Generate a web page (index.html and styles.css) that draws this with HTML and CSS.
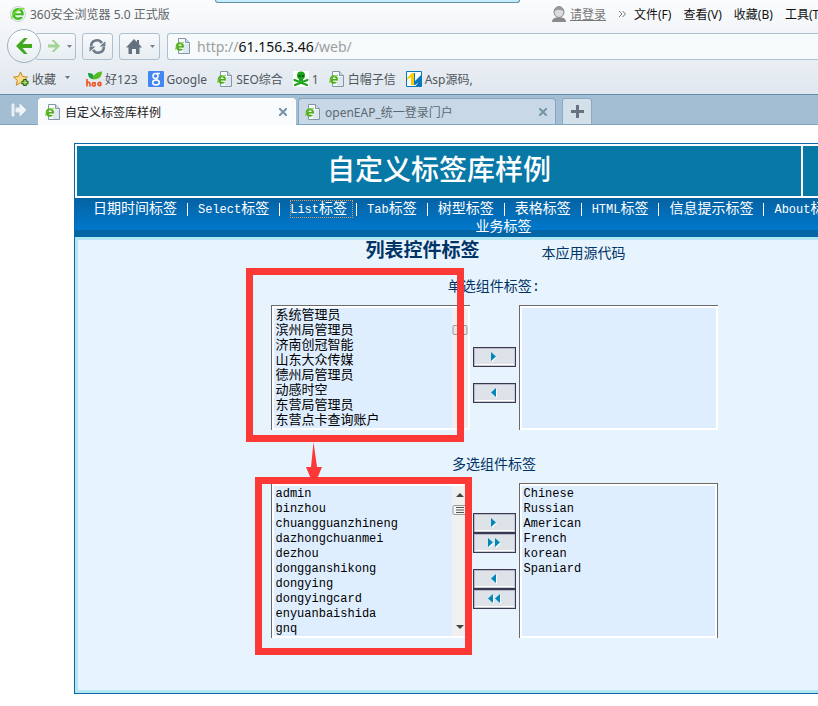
FILE: index.html
```html
<!DOCTYPE html>
<html lang="zh-CN">
<head>
<meta charset="utf-8">
<title>自定义标签库样例</title>
<link rel="stylesheet" href="styles.css">
</head>
<body>
<svg class="defs" aria-hidden="true">
  <symbol id="page-e" viewBox="0 0 16 16">
    <path d="M3.5 .5h7l4 4v11h-11z" fill="#f6fafc" stroke="#8298a8"/>
    <path d="M10.500.5v4h4" fill="#cddbe5" stroke="#8298a8"/>
    <path d="M8 6h6v9H8z" fill="#dfe8ee"/>
    <ellipse cx="4.800" cy="8.500" rx="3.100" ry="3.200" fill="none" stroke="#4dae17" stroke-width="2"/>
    <path d="M2 8.800h6" stroke="#4dae17" stroke-width="1.600"/>
    <path d="M5.800 9.700h3v1.300h-3z" fill="#f6fafc"/>
    <path d="M.8 12C0 9 4 5 9 4.600" fill="none" stroke="#7ccb3a"/>
  </symbol>
  <symbol id="tri-right" viewBox="0 0 6 10"><path d="M1 1v9l5-4.500z" fill="#fff"/><path d="M0 0v9l5-4.500z" fill="#0088b8"/></symbol>
  <symbol id="tri-left" viewBox="0 0 6 10"><path d="M6 1v9L1 5z" fill="#fff"/><path d="M5 0v9L0 4.500z" fill="#0088b8"/></symbol>
</svg>

<header class="browser">
  <div class="titlebar">
    <svg class="logo" viewBox="0 0 16 16"><circle cx="8" cy="8" r="7.500" fill="#eef4ee" stroke="#c9d3d8"/><ellipse cx="8" cy="8" rx="4.500" ry="4.800" fill="none" stroke="#3dbb22" stroke-width="2.600"/><path d="M4 8.300h8.500" stroke="#3dbb22" stroke-width="2"/><path d="M9.500 9.400h4.500v1.500H9.500z" fill="#eef4ee"/><path d="M2 13C1 9 8 2 14.500 2.500" fill="none" stroke="#7bdc3a" stroke-width="1.400"/></svg>
    <span class="product">360安全浏览器 5.0 正式版</span>
    <span class="skin-edge"></span>
    <nav class="menu">
      <svg class="user" viewBox="0 0 14 16"><path d="M0 16c0-3 2-4 4-4.500h6c2 .5 4 1.500 4 4.500z" fill="#8a8a8a"/><ellipse cx="7" cy="6" rx="5" ry="5.500" fill="#dcdcdc" stroke="#8a8a8a"/><path d="M2 6C2-1 12-1 12 6 10 3 4 3 2 6z" fill="#999"/></svg>
      <a class="login" href="#">请登录</a>
      <svg class="more" viewBox="0 0 8 8"><path d="M1 1l3 3-3 3M4.500 1l3 3-3 3" fill="none" stroke="#777"/></svg>
      <a href="#">文件(F)</a><a href="#">查看(V)</a><a href="#">收藏(B)</a><a href="#">工具(T)</a>
    </nav>
  </div>

  <div class="toolbar">
    <div class="history">
      <button class="back" aria-label="后退"><svg viewBox="0 0 16 16"><path d="M8 0L0 8l8 8h3.500L6.500 10H16V6H6.500l5-6z" fill="#42a81d"/></svg></button>
      <button class="forward" aria-label="前进"><svg class="arrow" viewBox="0 0 12 12"><path d="M6 0l6 6-6 6H3.500l4-4.500H0v-3h7.500L3.500 0z" fill="#9fd492"/></svg><svg class="caret" viewBox="0 0 5 3"><path d="M0 0h5L2.500 3z" fill="#75828e"/></svg></button>
    </div>
    <button class="tool" aria-label="刷新"><svg class="refresh" viewBox="0 0 18 16"><path d="M3 7.500C3 1.500 11 .5 13 5M15 8.500c0 6-8 7-10 2.500" fill="none" stroke="#6d7b89" stroke-width="2.400"/><path d="M16.500 3v5H11zM1.500 13V8H7z" fill="#6d7b89"/></svg></button>
    <button class="tool home" aria-label="主页"><svg class="house" viewBox="0 0 16 15"><path d="M8 0l3 3V1h2v4l3 3.500h-2.500V15H10v-5H6v5H2.500V8.500H0z" fill="#65717e"/></svg><svg class="caret" viewBox="0 0 5 3"><path d="M0 0h5L2.500 3z" fill="#75828e"/></svg></button>
    <div class="address"><svg class="fav"><use href="#page-e"/></svg><span>http://<b>61.156.3.46</b>/web/</span></div>
  </div>

  <div class="bookmarks">
    <a class="star" href="#"><svg class="fav" viewBox="0 0 16 16"><path d="M7.500 1l2 4.500 5 .5-3.800 3.300 1.100 5-4.300-2.600-4.300 2.600 1.100-5L.5 6l5-.5z" fill="#ffdc86" stroke="#c48a2c"/><path d="M12 8v7M8.500 11.500h7" stroke="#216414" stroke-width="3.500"/><path d="M12 9v5M9.500 11.500h5" stroke="#b7e46a" stroke-width="1.300"/></svg>收藏<svg class="caret" viewBox="0 0 5 3"><path d="M0 0h5L2.500 3z" fill="#66727e"/></svg></a>
    <a href="#"><svg class="fav" viewBox="0 0 16 16"><path d="M2 2c5 0 6 2 6 6-4 0-6-2-6-6z" fill="#19a63a"/><path d="M7 8.500c0-4 3-8 9-8 0 5-3 8-9 8z" fill="#59bd22"/><path d="M1 8v7.500M1 12c3-2 3 0 3 3.500M14.800 12a1.600 1.600 0 1 0 0 2zM9 11v4.500M9 12c-3-1.500-3.500 3-1.500 3s1.500-1 1.500-2" fill="none" stroke="#f0501b" stroke-width="1.600"/></svg>好123</a>
    <a href="#"><svg class="fav" viewBox="0 0 16 16"><rect width="16" height="16" rx="1" fill="#4387f5"/><ellipse cx="7.500" cy="5" rx="2.500" ry="2.500" fill="none" stroke="#fff" stroke-width="1.500"/><ellipse cx="8" cy="11.500" rx="3.300" ry="2.500" fill="none" stroke="#fff" stroke-width="1.500"/><path d="M8 2.500h4M8 7.500l1.500 2" stroke="#fff" stroke-width="1.300"/></svg>Google</a>
    <a href="#"><svg class="fav"><use href="#page-e"/></svg>SEO综合</a>
    <a href="#"><svg class="fav" viewBox="0 0 16 16"><path fill="#fff" d="M0 0h16v16H0z"/><ellipse cx="8" cy="4.500" rx="4" ry="4" fill="#1aa51a"/><path d="M6 7h4v3H6z" fill="#1aa51a"/><path d="M1.500 9L14 14M14.500 9L2 14" stroke="#1aa51a" stroke-width="2.200" stroke-linecap="round"/><path d="M5.500 4h2v2h-2zM8.800 4h2v2h-2z" fill="#075b07"/></svg>1</a>
    <a href="#"><svg class="fav"><use href="#page-e"/></svg>白帽子信</a>
    <a href="#"><svg class="fav" viewBox="0 0 16 16"><path d="M.5.5h15v15H.5z" fill="#fff" stroke="#0877bc"/><path d="M1 7l5-5h2v12H5V6L1 9z" fill="#fc0"/><path d="M9 2v8l6-6v11H9.500l3-3.500L9 14H8V2z" fill="#0877bc"/></svg>Asp源码,</a>
  </div>

  <div class="tabs">
    <button class="side" aria-label="侧边栏"><svg viewBox="0 0 16 14"><path d="M1 1h2v12H1zM5 5h4V1l6 6-6 6V9H5z" fill="#eef4f8" stroke="#e2edf4"/></svg></button>
    <div class="tab active"><svg class="fav"><use href="#page-e"/></svg><span>自定义标签库样例</span><button class="close" aria-label="关闭"><svg viewBox="0 0 8 8"><path d="M0 0l8 8M8 0L0 8" stroke="#7793aa" stroke-width="2"/></svg></button></div>
    <div class="tab"><svg class="fav"><use href="#page-e"/></svg><span>openEAP_统一登录门户</span><button class="close" aria-label="关闭"><svg viewBox="0 0 8 8"><path d="M0 0l8 8M8 0L0 8" stroke="#7793aa" stroke-width="2"/></svg></button></div>
    <button class="new" aria-label="新标签"><svg viewBox="0 0 13 13"><path d="M6.500 0v13M0 6.500h13" stroke="#67737e" stroke-width="3"/></svg></button>
  </div>
</header>

<main class="frame">
  <div class="banner"><h1>自定义标签库样例</h1><div class="banner-side"></div></div>
  <nav class="site-nav">
    <ul>
      <li><a href="#">日期时间标签</a></li>
      <li><a href="#"><i>Select</i>标签</a></li>
      <li class="focus"><a href="#"><i>List</i>标签</a></li>
      <li><a href="#"><i>Tab</i>标签</a></li>
      <li><a href="#">树型标签</a></li>
      <li><a href="#">表格标签</a></li>
      <li><a href="#"><i>HTML</i>标签</a></li>
      <li><a href="#">信息提示标签</a></li>
      <li><a href="#"><i>About</i>标签</a></li>
    </ul>
    <a class="business" href="#">业务标签</a>
  </nav>
  <section class="panel">
    <div class="heading"><h2>列表控件标签</h2><a href="#">本应用源代码</a></div>

    <div class="picker single">
      <label for="single-from">单选组件标签:</label>
      <div class="lists">
        <div class="listbox">
          <select id="single-from" size="8">
            <option>系统管理员</option><option>滨州局管理员</option><option>济南创冠智能</option><option>山东大众传媒</option><option>德州局管理员</option><option>动感时空</option><option>东营局管理员</option><option>东营点卡查询账户</option>
          </select>
          <span class="scroll"><svg viewBox="0 0 16 10"><rect x="1" y=".5" width="14" height="9" rx="1" fill="#e6e6e6" stroke="#999"/><path d="M5 2.500h6M5 5h6M5 7.500h6" stroke="#555"/></svg></span>
        </div>
        <div class="moves">
          <button aria-label="添加"><svg><use href="#tri-right"/></svg></button>
          <button class="apart" aria-label="移除"><svg><use href="#tri-left"/></svg></button>
        </div>
        <div class="listbox"><select size="8" aria-label="已选"></select></div>
      </div>
      <span class="mark"></span>
      <svg class="pointer" viewBox="0 0 16 37"><path d="M7.500 0l3.500 25h5L11 37H5L0 25h5z" fill="#fd3938"/></svg>
    </div>

    <div class="picker multi">
      <label for="multi-from">多选组件标签</label>
      <div class="lists">
        <div class="listbox">
          <select id="multi-from" size="10" multiple>
            <option>admin</option><option>binzhou</option><option>chuangguanzhineng</option><option>dazhongchuanmei</option><option>dezhou</option><option>dongganshikong</option><option>dongying</option><option>dongyingcard</option><option>enyuanbaishida</option><option>gnq</option>
          </select>
          <span class="scroll ends"><svg class="end" viewBox="0 0 8 4"><path d="M0 4l4-4 4 4z" fill="#444"/></svg><svg viewBox="0 0 16 10"><rect x="1" y=".5" width="14" height="9" rx="1" fill="#f4f4f4" stroke="#999"/><path d="M4 2.500h8M4 5h8M4 7.500h8" stroke="#555"/></svg><svg class="end last" viewBox="0 0 8 4"><path d="M0 0l4 4 4-4z" fill="#444"/></svg></span>
        </div>
        <div class="moves">
          <button aria-label="添加"><svg><use href="#tri-right"/></svg></button>
          <button aria-label="全部添加"><svg><use href="#tri-right"/></svg><svg><use href="#tri-right"/></svg></button>
          <button class="apart" aria-label="移除"><svg><use href="#tri-left"/></svg></button>
          <button aria-label="全部移除"><svg><use href="#tri-left"/></svg><svg><use href="#tri-left"/></svg></button>
        </div>
        <div class="listbox edged">
          <select size="10" multiple aria-label="已选语言">
            <option>Chinese</option><option>Russian</option><option>American</option><option>French</option><option>korean</option><option>Spaniard</option>
          </select>
        </div>
      </div>
      <span class="mark"></span>
    </div>
  </section>
</main>
</body>
</html>
```
FILE: styles.css
```css
* { box-sizing: border-box; }
html { overflow: hidden; }
body {
  margin: 0;
  overflow: hidden;
  background: #fff;
  font-family: "Noto Sans", "Noto Sans CJK SC", sans-serif;
  font-size: 12px;
}
svg { display: block; flex: none; }
a { color: inherit; text-decoration: none; white-space: nowrap; }
button { padding: 0; border: 0; background: none; font: inherit; }
.defs { position: absolute; width: 0; height: 0; }
.fav { width: 16px; height: 16px; }
.caret { width: 5px; height: 3px; }

/* browser chrome */
.browser { background: linear-gradient(#fbfcfd, #edf1f5 50px, #e0e7ef 94px); }
.titlebar {
  display: flex;
  align-items: center;
  height: 31px;
  padding: 0 0 3px 10px;
  color: #606468;
}
.logo { width: 16px; height: 16px; margin-right: 4px; }
.product { white-space: nowrap; flex: none; width: 185px; }
.skin-edge {
  align-self: flex-start;
  flex: none;
  width: 305px;
  height: 3px;
  background: #c4ecfb;
  border: solid #6591a8;
  border-width: 0 1px 1px;
  border-radius: 0 0 4px 4px;
}
.menu {
  display: flex;
  align-items: center;
  gap: 12px;
  height: 31px;
  margin-left: 32px;
  color: #111;
}
.menu .user { width: 14px; height: 16px; margin-right: -8px; }
.menu .login { color: #777; text-decoration: underline; }
.menu .more { width: 8px; height: 8px; margin-right: -4px; }

.toolbar { display: flex; align-items: center; height: 30px; padding-left: 7px; }
.history { display: flex; align-items: center; width: 69px; margin-right: 6px; }
.back {
  position: relative;
  z-index: 1;
  display: grid;
  place-items: center;
  flex: none;
  width: 34px;
  height: 34px;
  border: 1px solid #9fb3c1;
  border-radius: 50%;
  background: linear-gradient(#fff, #e6edf2);
}
.back svg { width: 16px; height: 16px; }
.forward, .tool {
  display: flex;
  align-items: center;
  justify-content: center;
  height: 27px;
  border: 1px solid #abc1d0;
  border-radius: 3px;
  background: linear-gradient(#f7f9fb, #e7edf2);
}
.forward { flex: 1; gap: 7px; margin-left: -6px; padding-left: 8px; }
.forward .arrow { width: 12px; height: 12px; }
.tool { width: 31px; margin-right: 6px; }
.refresh { width: 19px; height: 17px; }
.home { width: 41px; gap: 8px; margin-right: 7px; padding-left: 2px; }
.house { width: 16px; height: 15px; }
.address {
  display: flex;
  align-items: center;
  gap: 6px;
  flex: 1;
  height: 27px;
  padding-left: 7px;
  border: solid #a9c2d2;
  border-width: 1px 0 1px 1px;
  border-radius: 3px 0 0 3px;
  background: #f7fafb;
  color: #9b9fa2;
  font-size: 14px;
}
.address b { color: #111; font-weight: 400; }

.bookmarks {
  display: flex;
  align-items: center;
  gap: 10px;
  height: 33px;
  padding: 3px 0 0 13px;
  color: #50565c;
}
.bookmarks a { display: flex; align-items: center; gap: 3px; }
.bookmarks .caret { margin: 0 6px 4px 6px; }

.tabs {
  display: flex;
  align-items: stretch;
  height: 31px;
  padding-top: 3px;
  border-top: 1px solid #5f8ca9;
  border-bottom: 1px solid #7fa4bd;
  background: #a3bdd3;
}
.side { display: grid; place-items: center; width: 38px; }
.side svg { width: 16px; height: 14px; margin-bottom: 3px; }
.tab {
  display: flex;
  align-items: center;
  gap: 4px;
  width: 258px;
  margin-right: 6px;
  padding: 0 8px 0 6px;
  border: 1px solid #86a6bf;
  border-bottom: 0;
  border-radius: 4px 4px 0 0;
  background: #c9d8e6;
  color: #5c6873;
}
.tab.active {
  margin: 0 2px -1px 0;
  border-color: #fff;
  background: #f9fbfc;
  color: #222;
}
.tab span { flex: 1; white-space: nowrap; }
.tab .close svg { width: 8px; height: 8px; }
.new {
  display: grid;
  place-items: center;
  width: 30px;
  border: 1px solid #8dabc2;
  border-bottom: 0;
  border-radius: 3px 3px 0 0;
  background: #d3dfe9;
}
.new svg { width: 13px; height: 13px; }

/* page: the frame is wider than the window and runs off its right edge */
.frame {
  margin: 18px -115px 0 74px;
  border: 1px solid #0b67a5;
  color: #036;
  font-family: "Liberation Mono", "Noto Sans CJK SC", monospace;
  font-size: 14px;
}
.banner {
  display: flex;
  gap: 2px;
  height: 54px;
  padding: 2px;
  background: #fff;
}
.banner h1 {
  flex: 1;
  margin: 0;
  padding-top: 4px;
  background: #0878a6;
  color: #fff;
  font-size: 28px;
  font-weight: 500;
  line-height: 46px;
  text-align: center;
}
.banner-side { width: 127px; background: #0878a6; }
.site-nav {
  height: 39px;
  padding-top: 2px;
  border-bottom: 7px solid #0566a6;
  background: linear-gradient(#0662a2, #0078cc);
  color: #fff;
  line-height: 18px;
}
.site-nav ul {
  display: flex;
  height: 18px;
  margin: 0;
  padding: 0 0 0 18px;
  list-style: none;
}
.site-nav li { display: flex; align-items: center; }
.site-nav li:not(:last-child)::after {
  content: "";
  width: 1px;
  height: 13px;
  margin: 0 10px;
  background: #fff;
}
.site-nav a { display: block; height: 18px; }
.site-nav i { font-size: 12px; font-style: normal; }
.site-nav .focus a { outline: 1px dotted #e09a5c; outline-offset: -1px; padding-right: 6px; }
.site-nav .focus:not(:last-child)::after { margin-left: 3px; }
.site-nav .business { text-align: center; }

.panel {
  padding: 0 22px 52px 0;
  border: 3px solid #b3e6f3;
  border-right: 0;
  background: #e8f4fd;
}
.heading {
  display: flex;
  justify-content: center;
  align-items: center;
  gap: 62px;
  height: 24px;
  padding-left: 3px;
}
.heading h2 { margin: 0; font-size: 19px; line-height: 20px; }
.picker { position: relative; width: 447px; margin: 0 auto; }
.picker label { display: block; height: 28px; line-height: 20px; text-align: center; }
.single { padding-top: 13px; }
.multi { padding-top: 25px; }
.lists { display: flex; justify-content: space-between; }
.listbox {
  display: flex;
  width: 199px;
  padding: 2px;
  border: solid #6b6b6b;
  border-width: 1px 0 0 1px;
  background: #fff;
}
.listbox.edged { border-right-width: 1px; }
.listbox select {
  flex: 1;
  min-width: 0;
  height: 120px;
  margin: 0;
  padding: 0;
  overflow: hidden;
  border: 0;
  border-radius: 0;
  outline: 0;
  background: #dfeeff;
  color: #000;
  font-family: "Liberation Mono", "Noto Sans CJK SC", monospace;
  font-size: 13px;
}
.multi select { height: 150px; font-size: 12px; }
.listbox option {
  display: flex;
  align-items: center;
  height: 15px;
  min-height: 15px;
  padding: 0 2px;
}
.single option { padding-bottom: 4px; }
.scroll { width: 16px; padding-top: 17px; background: #f0f0f0; }
.scroll svg { width: 16px; height: 10px; }
.scroll.ends { display: flex; flex-direction: column; align-items: center; gap: 8px; padding: 7px 0; }
.scroll .end { width: 8px; height: 4px; }
.scroll .last { margin-top: auto; }

.moves { display: flex; flex-direction: column; width: 43px; padding-top: 42px; }
.multi .moves { padding-top: 30px; }
.moves button {
  display: flex;
  align-items: center;
  justify-content: center;
  gap: 1px;
  height: 20px;
  border: 1px solid #383850;
  background: #dde3e8;
  box-shadow: inset 1px 1px #b9b9ca, inset -1px -1px #c9c9d6, inset 0 -2px #fff;
}
.moves .apart { margin-top: 16px; }
.moves svg { width: 6px; height: 10px; }

/* red call-outs over the lists */
.mark { position: absolute; border: 7px solid #fd3938; pointer-events: none; }
.single .mark { left: -25px; top: 4px; width: 218px; height: 174px; }
.multi .mark { left: -16px; top: 47px; width: 217px; height: 178px; }
.pointer { position: absolute; z-index: 1; left: 35px; top: 178px; width: 16px; height: 37px; }
```
